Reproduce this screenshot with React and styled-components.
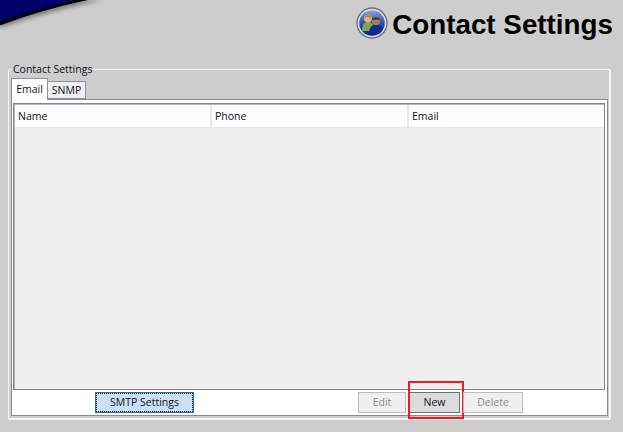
import React from 'react';
import styled, { createGlobalStyle } from 'styled-components';

const GlobalStyle = createGlobalStyle`
  html, body {
    margin: 0;
    padding: 0;
    background: #cdcdcd;
  }
`;

const Page = styled.div`
  position: relative;
  width: 623px;
  height: 432px;
  overflow: hidden;
  box-sizing: border-box;
  padding: 3px 8px 0 8px;
  background: #cdcdcd;
  font-family: "Open Sans", "Liberation Sans", sans-serif;
  font-size: 10.5px;
  color: #10101c;
`;

const Swoosh = styled.svg`
  position: absolute;
  left: 0;
  top: 0;
`;

const Header = styled.header`
  display: flex;
  justify-content: flex-end;
  align-items: center;
  gap: 4px;
  height: 40px;
  margin-right: 2px;
`;

const Title = styled.h1`
  margin: 3px 0 0 0;
  font-family: "Liberation Sans", Arial, sans-serif;
  font-size: 27.8px;
  font-weight: 700;
  line-height: 40px;
  color: #000;
`;

const Group = styled.fieldset`
  box-sizing: border-box;
  width: 603px;
  height: 358px;
  margin: 19px 0 0 0;
  padding: 0 1px 0 2px;
  border: 2px solid #f4f6f8;
  border-width: 1.500px 2px 2px 1.500px;
  border-radius: 2px;
`;

const GroupLegend = styled.legend`
  margin-left: 1px;
  padding: 0 1px;
  line-height: 14px;
  font-size: 10.5px;
`;

const Tabs = styled.div`
  display: flex;
  align-items: flex-end;
  height: 21px;
  margin-top: 2px;
`;

const Tab = styled.div`
  box-sizing: border-box;
  display: flex;
  align-items: center;
  justify-content: center;
  position: relative;
  width: ${(p) => p.$width}px;
  height: ${(p) => (p.$active ? 22 : 18)}px;
  margin-bottom: ${(p) => (p.$active ? -1 : 0)}px;
  padding-bottom: ${(p) => (p.$active ? 2 : 0)}px;
  border: 1px solid #8f9098;
  border-bottom: ${(p) => (p.$active ? 'none' : '1px solid #8f9098')};
  border-left: ${(p) => (p.$active ? '1px solid #8f9098' : 'none')};
  background: ${(p) => (p.$active ? '#ffffff' : '#f0f0f0')};
  z-index: ${(p) => (p.$active ? 1 : 0)};
`;

const TabPanel = styled.div`
  box-sizing: border-box;
  display: flex;
  flex-direction: column;
  height: 317px;
  padding: 3px 2px 2px 1px;
  border: 1px solid #8a8a90;
  background: #ffffff;
`;

const Table = styled.div`
  box-sizing: border-box;
  height: 287px;
  padding: 1px 0 0 1px;
  border: 1px solid #85858b;
  box-shadow: inset 1px 1px 0 #b4b4ba;
  background: #efefef;
`;

const HeaderRow = styled.div`
  display: grid;
  grid-template-columns: 197px 197px 1fr;
  height: 22px;
  background: #ffffff;
  border-bottom: 1px solid #e6e6e6;
`;

const HeaderCell = styled.div`
  box-sizing: border-box;
  display: flex;
  align-items: center;
  padding-left: 3px;
  border-right: 2px solid #e8e8e8;
  background: #fdfdfd;
  &:last-child {
    border-right: none;
  }
`;

const ButtonBar = styled.div`
  display: flex;
  align-items: center;
  height: 22px;
  margin-top: 1px;
  padding-left: 82px;
`;

const Button = styled.div`
  box-sizing: border-box;
  display: flex;
  align-items: center;
  justify-content: center;
  position: relative;
  width: ${(p) => p.$width}px;
  height: 21px;
  margin-left: ${(p) => p.$gap || 0}px;
  border: 1px solid ${(p) => (p.$pressed ? '#6f6f6f' : '#bcbcbc')};
  background: ${(p) => (p.$pressed ? '#dcdcdc' : '#f0f0f0')};
  color: ${(p) => (p.$disabled ? '#8d8d8d' : 'inherit')};
`;

const FocusButton = styled(Button)`
  border: 1px solid #2f6d9e;
  background: #c9e1f2;
  outline: 1px dotted #000;
  outline-offset: -2px;
`;

const Highlight = styled.div`
  position: absolute;
  left: -2px;
  top: -12px;
  width: 56px;
  height: 38px;
  box-sizing: border-box;
  border: 2px solid #ed1c24;
`;

const ContactsIcon = () => (
  <svg width="32" height="32" viewBox="0 0 32 32">
    <defs>
      <linearGradient id="disc" x1="0" y1="0" x2="0" y2="1">
        <stop offset="0" stopColor="#8ea4dc" />
        <stop offset="0.45" stopColor="#3557ad" />
        <stop offset="1" stopColor="#0a1c86" />
      </linearGradient>
      <clipPath id="discClip">
        <circle cx="16" cy="16" r="12.8" />
      </clipPath>
    </defs>
    <circle cx="16" cy="16" r="15" fill="#dfe0e6" stroke="#6f6f76" strokeWidth="1.4" />
    <circle cx="16" cy="16" r="12.8" fill="url(#disc)" />
    <g clipPath="url(#discClip)">
      <path d="M6 24c0-6 2-9 6-9s6 3 6 9z" fill="#86a24f" />
      <circle cx="12" cy="11.500" r="4" fill="#d6b384" />
      <path d="M8 11c.5-4 7.500-4.300 8 0-2.500-1.200-5.500-1.200-8 0z" fill="#a98545" />
      <path d="M13 27c0-6 2.500-9.500 7-9.500s7 3.500 7 9.500z" fill="#0e2c8a" />
      <circle cx="20" cy="14" r="4.200" fill="#a87c62" />
      <path d="M15.800 13.500c0-4.200 8.400-4.200 8.400 0-2.800-1.200-5.600-1.200-8.400 0z" fill="#3a3431" />
    </g>
  </svg>
);

const App = () => (
  <Page>
    <GlobalStyle />
    <Swoosh width="130" height="34" viewBox="0 0 130 34">
      <defs>
        <filter id="soft" x="-20%" y="-50%" width="140%" height="220%">
          <feGaussianBlur stdDeviation="2.2" />
        </filter>
      </defs>
      <path d="M0 28C30 18 62 8 104 0L0 0z" fill="#7f7f7f" filter="url(#soft)" />
      <path d="M0 25.500C28 15 54 7 88 0L0 0z" fill="#000" />
      <path d="M0 21.500C24 13 50 6 76 0L0 0z" fill="#00006a" />
    </Swoosh>
    <Header>
      <ContactsIcon />
      <Title>Contact Settings</Title>
    </Header>
    <Group>
      <GroupLegend>Contact Settings</GroupLegend>
      <Tabs>
        <Tab $active $width={37}>Email</Tab>
        <Tab $width={38}>SNMP</Tab>
      </Tabs>
      <TabPanel>
        <Table>
          <HeaderRow>
            <HeaderCell>Name</HeaderCell>
            <HeaderCell>Phone</HeaderCell>
            <HeaderCell>Email</HeaderCell>
          </HeaderRow>
        </Table>
        <ButtonBar>
          <FocusButton $width={99}>SMTP Settings</FocusButton>
          <Button $width={48} $gap={164} $disabled>Edit</Button>
          <Button $width={51} $gap={3} $pressed>
            New
            <Highlight />
          </Button>
          <Button $width={60} $gap={3} $disabled>Delete</Button>
        </ButtonBar>
      </TabPanel>
    </Group>
  </Page>
);

export default App;
